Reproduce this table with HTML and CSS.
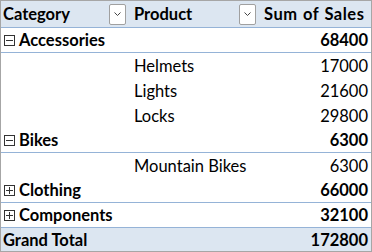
FILE: index.html
```html
<!DOCTYPE html>
<html>
<head>
<meta charset="utf-8">
<link rel="stylesheet" href="styles.css">
</head>
<body>
<div class="pivot">
  <div class="row head">
    <div class="cell c1 hcell"><span>Category</span><span class="filter"><svg width="9" height="6" viewBox="0 0 9 6"><path d="M1.5 1.5 L4.5 4.5 L7.5 1.5" fill="none" stroke="#444" stroke-width="1"/></svg></span></div>
    <div class="cell c2 hcell"><span>Product</span><span class="filter"><svg width="9" height="6" viewBox="0 0 9 6"><path d="M1.5 1.5 L4.5 4.5 L7.5 1.5" fill="none" stroke="#444" stroke-width="1"/></svg></span></div>
    <div class="cell c3 hcell"><span class="sum">Sum of Sales</span></div>
  </div>
  <div class="row cat line">
    <div class="cell c1"><span class="box minus"></span>Accessories</div>
    <div class="cell c2"></div>
    <div class="cell c3 num">68400</div>
  </div>
  <div class="row item">
    <div class="cell c1"></div>
    <div class="cell c2">Helmets</div>
    <div class="cell c3 num">17000</div>
  </div>
  <div class="row item">
    <div class="cell c1"></div>
    <div class="cell c2">Lights</div>
    <div class="cell c3 num">21600</div>
  </div>
  <div class="row item">
    <div class="cell c1"></div>
    <div class="cell c2">Locks</div>
    <div class="cell c3 num">29800</div>
  </div>
  <div class="row cat line">
    <div class="cell c1"><span class="box minus"></span>Bikes</div>
    <div class="cell c2"></div>
    <div class="cell c3 num">6300</div>
  </div>
  <div class="row item">
    <div class="cell c1"></div>
    <div class="cell c2">Mountain Bikes</div>
    <div class="cell c3 num">6300</div>
  </div>
  <div class="row cat line">
    <div class="cell c1"><span class="box plus"></span>Clothing</div>
    <div class="cell c2"></div>
    <div class="cell c3 num">66000</div>
  </div>
  <div class="row cat line">
    <div class="cell c1"><span class="box plus"></span>Components</div>
    <div class="cell c2"></div>
    <div class="cell c3 num">32100</div>
  </div>
  <div class="row total">
    <div class="cell c1">Grand Total</div>
    <div class="cell c2"></div>
    <div class="cell c3 num">172800</div>
  </div>
</div>
</body>
</html>
```

FILE: styles.css
```css
html, body {
  margin: 0;
  padding: 0;
  background: #ffffff;
}
.pivot {
  width: 372px;
  height: 252px;
  box-sizing: border-box;
  border: 1px solid #a6a6a6;
  font-family: Lato, "Open Sans", sans-serif;
  font-size: 16.5px;
  color: #000;
  display: flex;
  flex-direction: column;
}
.row {
  display: grid;
  grid-template-columns: 130px 130px 1fr;
  height: 25px;
  box-sizing: border-box;
  flex: none;
}
.cell {
  display: flex;
  align-items: center;
  white-space: nowrap;
}
.head {
  height: 27px;
  background: #dce6f1;
  border-bottom: 1px solid #95b3d7;
  font-weight: bold;
}
.hcell {
  justify-content: space-between;
  padding-right: 5px;
}
.c1.hcell { padding-left: 2px; }
.c2.hcell { padding-left: 3px; }
.c3.hcell { padding-left: 3px; }
.sum { word-spacing: 1px; letter-spacing: 0.5px; }
.filter {
  width: 15px;
  height: 19px;
  background: #fff;
  border: 1px solid #a0a0a0;
  border-radius: 2px;
  display: flex;
  align-items: center;
  justify-content: center;
  box-sizing: content-box;
}
.line { border-bottom: 1px solid #95b3d7; }
.cat { font-weight: bold; }
.cat .c1 { padding-left: 3px; }
.item .c2 { padding-left: 3px; }
.num {
  justify-content: flex-end;
  padding-right: 3px;
}
.total {
  height: 23px;
  background: #dce6f1;
  font-weight: bold;
}
.total .c1 { padding-left: 2px; }
.box {
  width: 9px;
  height: 9px;
  border: 1px solid #333;
  margin-right: 4px;
  position: relative;
  flex: none;
}
.box::before {
  content: "";
  position: absolute;
  left: 1px;
  right: 1px;
  top: 4px;
  height: 1px;
  background: #333;
}
.plus::after {
  content: "";
  position: absolute;
  top: 1px;
  bottom: 1px;
  left: 4px;
  width: 1px;
  background: #333;
}
```
